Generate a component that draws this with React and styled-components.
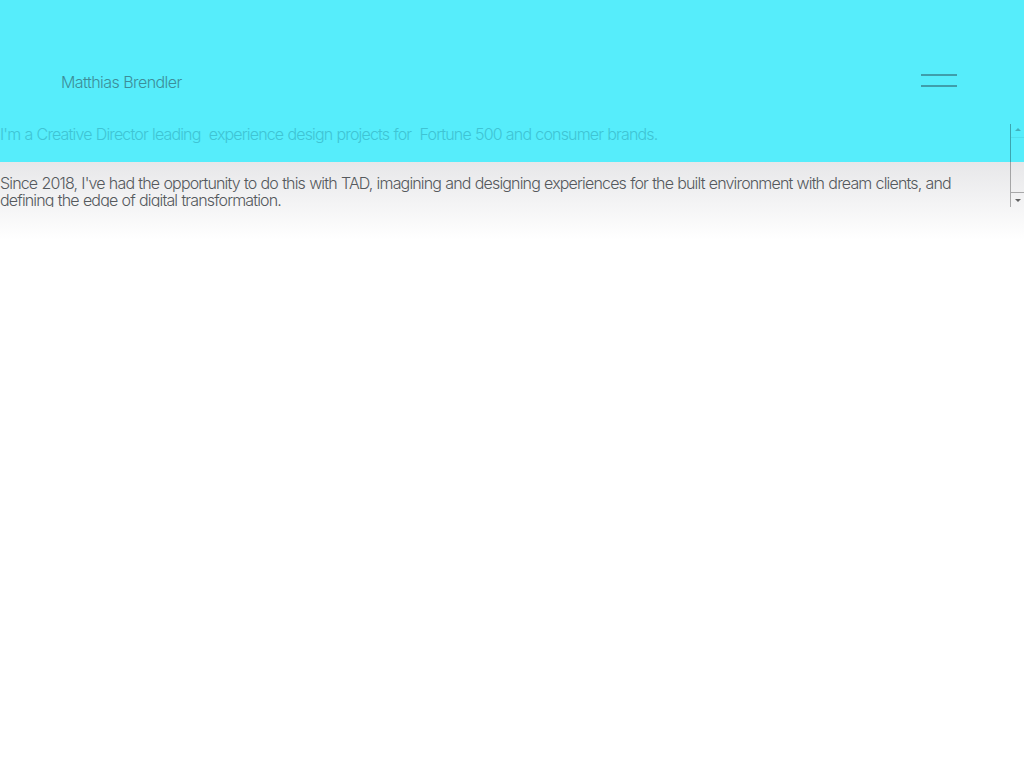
import React from "react";
import styled, { createGlobalStyle } from "styled-components";

const GlobalStyle = createGlobalStyle`
  html, body {
    margin: 0;
    padding: 0;
  }
  body {
    min-height: 768px;
    font-family: "Inter", "Noto Sans", sans-serif;
    font-weight: 300;
    background: linear-gradient(
      to bottom,
      #56edfb 0px,
      #56edfb 162px,
      #e7e7e9 162px,
      #ffffff 240px
    ) no-repeat;
    background-color: #ffffff;
  }
`;

function App() {
  return (
    <>
      <GlobalStyle />
      <Header>
        <Name>Matthias Brendler</Name>
        <Burger aria-label="menu">
          <BurgerLine />
          <BurgerLine />
        </Burger>
      </Header>
      <ScrollBox>
        <Content>
          <Intro>
            I'm a Creative Director leading&nbsp; experience design projects for&nbsp;
            Fortune 500 and consumer brands.
          </Intro>
          <Story>
            Since 2018, I've had the opportunity to do this with TAD, imagining and
            designing experiences for the built environment with dream clients, and
            defining the edge of digital transformation.
          </Story>
        </Content>
        <Scrollbar>
          <Arrow dir="up" />
          <Thumb />
          <ArrowBox>
            <Arrow dir="down" />
          </ArrowBox>
        </Scrollbar>
      </ScrollBox>
    </>
  );
}

export default App;

const Header = styled.header`
  box-sizing: border-box;
  height: 124px;
  padding: 72px 67px 0 61px;
  display: flex;
  justify-content: space-between;
  align-items: flex-start;
`;
const Name = styled.div`
  font-size: 16px;
  line-height: 20px;
  letter-spacing: -0.55px;
  color: #3d8d99;
`;
const Burger = styled.button`
  width: 36px;
  height: 20px;
  padding: 2px 0 0;
  margin: 0;
  border: 0;
  background: none;
  display: flex;
  flex-direction: column;
  gap: 9px;
`;
const BurgerLine = styled.span`
  display: block;
  width: 36px;
  height: 2px;
  background: #3f9eab;
`;
const ScrollBox = styled.section`
  position: relative;
  height: 83px;
  overflow: hidden;
`;
const Content = styled.div`
  padding-right: 52px;
  font-size: 16px;
  letter-spacing: -0.84px;
  word-spacing: 0.5px;
`;
const Intro = styled.p`
  margin: 0;
  line-height: 20px;
  color: #3fc4d4;
`;
const Story = styled.p`
  margin: 31px 0 0;
  line-height: 17px;
  color: #55595d;
`;
const Scrollbar = styled.div`
  position: absolute;
  top: -4px;
  right: 0;
  bottom: 0;
  width: 13px;
  border-left: 1px solid rgba(0, 0, 0, 0.3);
  display: flex;
  flex-direction: column;
  align-items: center;
`;
const Thumb = styled.div`
  flex: 1;
  align-self: stretch;
  margin-top: 6px;
  border-top: 1px solid rgba(0, 0, 0, 0.06);
`;
const ArrowBox = styled.div`
  align-self: stretch;
  height: 14px;
  border-top: 1px solid rgba(0, 0, 0, 0.3);
  display: flex;
  justify-content: center;
  align-items: center;
`;
const Arrow = styled.span`
  width: 0;
  height: 0;
  margin-top: ${(p) => (p.dir === "up" ? "8px" : "0")};
  border-left: 3px solid transparent;
  border-right: 3px solid transparent;
  ${(p) =>
    p.dir === "up"
      ? "border-bottom: 3px solid rgba(0, 0, 0, 0.25);"
      : "border-top: 3px solid rgba(0, 0, 0, 0.6);"}
`;
